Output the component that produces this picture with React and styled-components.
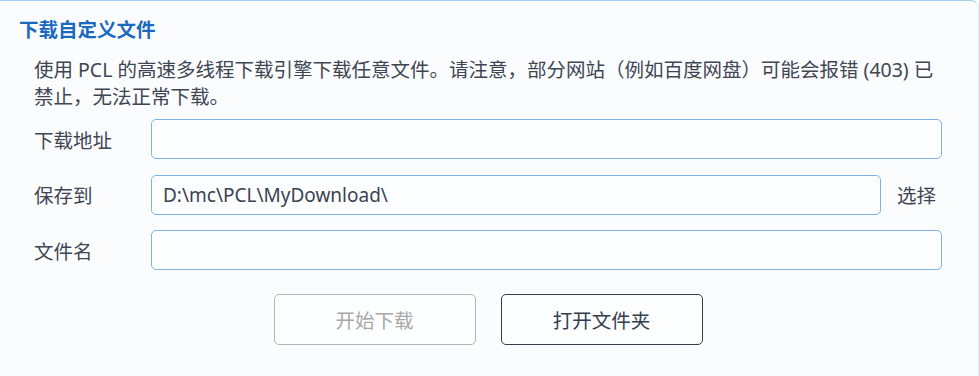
import React from 'react';
import styled, { createGlobalStyle } from 'styled-components';

const GlobalStyle = createGlobalStyle`
  html, body {
    margin: 0;
    padding: 0;
    background: #ffffff;
    overflow: hidden;
  }
  body {
    font-family: "Noto Sans", "Noto Sans CJK SC", sans-serif;
  }
`;

const ROWS = [
  { label: '下载地址', value: '' },
  { label: '保存到', value: 'D:\\mc\\PCL\\MyDownload\\', action: '选择' },
  { label: '文件名', value: '' },
];

export default function App() {
  return (
    <>
      <GlobalStyle />
      <Card>
        <Title>下载自定义文件</Title>
        <Body>
          <Description>
            使用 PCL 的高速多线程下载引擎下载任意文件。请注意，部分网站（例如百度网盘）可能会报错 (403) 已禁止，无法正常下载。
          </Description>
          <Form>
            {ROWS.map(row => (
              <React.Fragment key={row.label}>
                <Label>{row.label}</Label>
                <Input $wide={!row.action} defaultValue={row.value} />
                {row.action && <Action>{row.action}</Action>}
              </React.Fragment>
            ))}
          </Form>
          <Buttons>
            <Button disabled>开始下载</Button>
            <Button>打开文件夹</Button>
          </Buttons>
        </Body>
      </Card>
    </>
  );
}

const Card = styled.div`
  box-sizing: border-box;
  margin-left: -12px;
  width: 991px;
  height: 390px;
  padding: 16px 0 0 30px;
  background: #fbfcfe;
  border: 1px solid #e4eefa;
  border-top-color: #a9cff3;
  border-radius: 8px;
`;

const Title = styled.div`
  height: 24px;
  line-height: 24px;
  font-size: 19.5px;
  font-weight: 700;
  color: #1a69c0;
  font-family: "Noto Sans CJK SC", sans-serif;
`;

const Body = styled.div`
  padding: 15px 36px 0 15px;
`;

const Description = styled.div`
  font-size: 19.5px;
  line-height: 27px;
  color: #3f4653;
  font-family: "Noto Sans", "Noto Sans CJK SC", sans-serif;
`;

const Form = styled.div`
  display: grid;
  grid-template-columns: 117px 1fr 61px;
  row-gap: 15.5px;
  margin-top: 9px;
  align-items: center;
`;

const Label = styled.div`
  grid-column: 1;
  font-size: 19.5px;
  color: #3f4653;
  font-family: "Noto Sans CJK SC", sans-serif;
`;

const Input = styled.input`
  grid-column: ${({ $wide }) => ($wide ? '2 / 4' : '2')};
  box-sizing: border-box;
  height: 40px;
  width: 100%;
  padding: 0 11px;
  border: 1.5px solid #80b2e6;
  border-radius: 5px;
  background: #fdfeff;
  font-size: 19px;
  color: #3b4250;
  font-family: "Noto Sans", "Noto Sans CJK SC", sans-serif;
  outline: none;
`;

const Action = styled.div`
  grid-column: 3;
  padding-left: 16px;
  font-size: 19.5px;
  color: #3f4653;
  font-family: "Noto Sans CJK SC", sans-serif;
`;

const Buttons = styled.div`
  display: flex;
  justify-content: center;
  gap: 25px;
  margin-top: 24px;
`;

const Button = styled.button`
  box-sizing: border-box;
  width: 202px;
  height: 51px;
  border: 1.5px solid #343d4b;
  border-radius: 5px;
  background: #fdfeff;
  font-size: 19.5px;
  color: #343d4b;
  font-family: "Noto Sans CJK SC", sans-serif;
  cursor: pointer;

  &:disabled {
    border-color: #b4b4b4;
    color: #a8a8a8;
    cursor: default;
  }
`;
